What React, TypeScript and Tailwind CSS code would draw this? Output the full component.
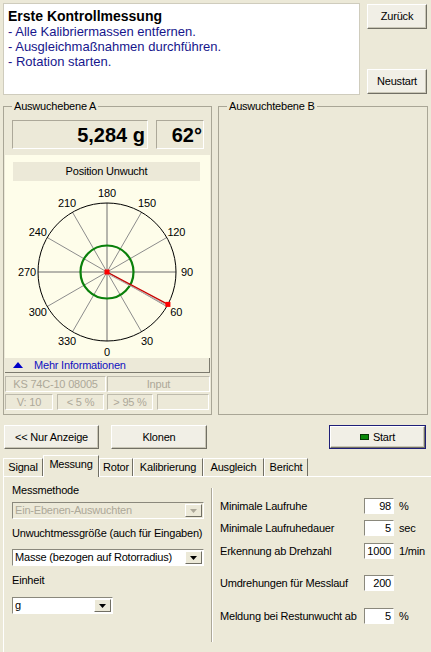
import React from "react";

const btn =
  "flex items-center justify-center bg-[#F1EFE6] border border-t-white border-l-white border-r-[#716F64] border-b-[#716F64] shadow-[inset_-1px_-1px_0_#C9C6B6]";

function Combo({ text, w, disabled }: { text: string; w: string; disabled?: boolean }) {
  return (
    <div
      className={`flex items-center h-[17px] ${w} border border-t-[#8A887C] border-l-[#8A887C] border-r-white border-b-white ${
        disabled ? "bg-[#ECE9D8] text-[#ACA899]" : "bg-white text-black"
      }`}
    >
      <span className="flex-1 pl-[2px] whitespace-nowrap overflow-hidden">{text}</span>
      <div className="w-[17px] h-[13px] mr-[1px] flex items-center justify-center bg-[#ECE9D8] border border-t-white border-l-white border-r-[#716F64] border-b-[#716F64]">
        <svg width="7" height="4" viewBox="0 0 7 4">
          <polygon points="0,0 7,0 3.5,4" fill={disabled ? "#ACA899" : "#000"} />
        </svg>
      </div>
    </div>
  );
}

function NumRow({ label, value, unit, mt }: { label: string; value: string; unit?: string; mt: string }) {
  return (
    <div className={`flex items-center h-[16px] ${mt}`}>
      <span className="w-[144px] whitespace-nowrap">{label}</span>
      <div className="w-[30px] h-[16px] bg-white border border-t-[#8A887C] border-l-[#8A887C] border-r-white border-b-white flex items-center justify-end pr-[2px]">
        {value}
      </div>
      {unit && <span className="ml-[5px]">{unit}</span>}
    </div>
  );
}

function Chart() {
  const cx = 102;
  const cy = 91;
  const R = 69;
  const rad = (d: number) => (d * Math.PI) / 180;
  const spokes = [0, 30, 60, 90, 120, 150];
  const labels = [0, 30, 60, 90, 120, 150, 180, 210, 240, 270, 300, 330];
  const a = 62;
  const px = cx + R * Math.sin(rad(a));
  const py = cy + R * Math.cos(rad(a));
  return (
    <svg width="205" height="177" viewBox="0 0 205 177" className="block">
      {spokes.map((d) => {
        const dx = R * Math.sin(rad(d));
        const dy = R * Math.cos(rad(d));
        return (
          <line
            key={d}
            x1={cx - dx}
            y1={cy - dy}
            x2={cx + dx}
            y2={cy + dy}
            stroke={d % 90 === 0 ? "#6E6E6E" : "#8C8C8C"}
            strokeWidth="1"
          />
        );
      })}
      <circle cx={cx} cy={cy} r={R} fill="none" stroke="#000" strokeWidth="1" />
      <circle cx={cx} cy={cy} r={26.5} fill="none" stroke="#0A800A" strokeWidth="2.2" />
      <line x1={cx} y1={cy + 1.5} x2={px} y2={py + 1.5} stroke="#B8A8A8" strokeWidth="1" />
      <line x1={cx} y1={cy} x2={px} y2={py} stroke="#C80000" strokeWidth="1.2" />
      <rect x={cx - 2.5} y={cy - 2.5} width="5" height="5" fill="#FF0000" />
      <rect x={px - 2.5} y={py - 2.5} width="5" height="5" fill="#FF0000" />
      {labels.map((d) => (
        <text
          key={d}
          x={cx + 80 * Math.sin(rad(d))}
          y={cy + 79.5 * Math.cos(rad(d))}
          textAnchor="middle"
          dominantBaseline="central"
          fontSize="11"
          fontFamily="'Liberation Sans', Arial, sans-serif"
          fill="#000"
        >
          {d}
        </text>
      ))}
    </svg>
  );
}

const disBox =
  "h-[16px] flex items-center justify-center text-[#ACA899] border border-t-[#BDBAAC] border-l-[#BDBAAC] border-r-white border-b-white";

export default function App() {
  const tabs: { t: string; w: string; sel?: boolean }[] = [
    { t: "Signal", w: "w-[40px]" },
    { t: "Messung", w: "w-[56px]", sel: true },
    { t: "Rotor", w: "w-[34px]" },
    { t: "Kalibrierung", w: "w-[70px]" },
    { t: "Ausgleich", w: "w-[61px]" },
    { t: "Bericht", w: "w-[44px]" },
  ];
  return (
    <div className="w-[431px] h-[652px] overflow-hidden bg-[#ECE9D8] text-black text-[11px] leading-[13px] tracking-[-0.2px] font-['Liberation_Sans',Arial,sans-serif]">
      {/* top area */}
      <div className="flex pt-[3px] pl-[3px]">
        <div className="w-[357px] h-[92px] bg-white border border-[#CFCCBD] pl-[4px] pt-[5px] tracking-normal">
          <div className="text-[14px] leading-[15px] font-bold">Erste Kontrollmessung</div>
          <div className="text-[13px] leading-[15px] text-[#16168C]">- Alle Kalibriermassen entfernen.</div>
          <div className="text-[13px] leading-[15px] text-[#16168C]">- Ausgleichmaßnahmen durchführen.</div>
          <div className="text-[13px] leading-[15px] text-[#16168C]">- Rotation starten.</div>
        </div>
        <div className="ml-[7px] w-[60px] h-[91px] pt-[1px] flex flex-col justify-between">
          <div className={btn + " h-[25px]"}>Zurück</div>
          <div className={btn + " h-[25px]"}>Neustart</div>
        </div>
      </div>

      {/* group boxes */}
      <div className="flex mt-[5px] pl-[3px] gap-[6px]">
        <fieldset className="w-[209px] h-[315px] border border-[#A9A696] px-[1px]">
          <legend className="ml-[7px] px-[2px] leading-[13px]">Auswuchebene A</legend>
          <div className="flex pl-[7px] mt-[7px] gap-[8px]">
            <div className="w-[136px] h-[29px] flex items-center justify-end pr-[2px] border border-t-[#ACA899] border-l-[#ACA899] border-r-white border-b-white text-[20px] leading-[20px] font-bold tracking-normal">
              5,284 g
            </div>
            <div className="w-[48px] h-[29px] flex items-center justify-end pr-[1px] border border-t-[#ACA899] border-l-[#ACA899] border-r-white border-b-white text-[20px] leading-[20px] font-bold tracking-normal">
              62°
            </div>
          </div>
          <div className="mt-[6px] h-[218px] bg-[#FEFDEA] flex flex-col">
            <div className="mt-[7px] ml-[8px] w-[187px] h-[19px] bg-[#ECE9D8] flex items-center justify-center">
              Position Unwucht
            </div>
            <Chart />
            <div className="h-[15px] bg-[#ECE9D8] border-r border-b border-[#7C7A6E] flex items-center">
              <svg width="10" height="6" viewBox="0 0 10 6" className="ml-[8px]">
                <polygon points="5,0 10,6 0,6" fill="#0000C8" />
              </svg>
              <span className="ml-[11px] text-[#1010C0]">Mehr Informationen</span>
            </div>
          </div>
          <div className="mt-[3px] flex gap-[1px]">
            <div className={disBox + " w-[101px]"}>KS 74C-10 08005</div>
            <div className={disBox + " w-[103px]"}>Input</div>
          </div>
          <div className="mt-[2px] flex">
            <div className={disBox + " w-[48px]"}>V: 10</div>
            <div className={disBox + " w-[47px] ml-[4px]"}>&lt; 5 %</div>
            <div className={disBox + " w-[46px] ml-[3px]"}>&gt; 95 %</div>
            <div className={disBox + " w-[52px] ml-[4px]"}></div>
          </div>
        </fieldset>
        <fieldset className="w-[210px] h-[315px] border border-[#A9A696]">
          <legend className="ml-[8px] px-[2px] leading-[13px]">Auswuchtebene B</legend>
        </fieldset>
      </div>

      {/* buttons */}
      <div className="flex mt-[10px] pl-[4px] pr-[5px] h-[24px]">
        <div className={btn + " w-[95px]"}>&lt;&lt; Nur Anzeige</div>
        <div className={btn + " w-[96px] ml-[12px]"}>Klonen</div>
        <div className="ml-auto w-[97px] border border-[#1F1F78]">
          <div className={btn + " h-full"}>
            <span className="w-[9px] h-[6px] bg-[#0A8A0A] border border-[#063806] mr-[4px]" />
            Start
          </div>
        </div>
      </div>

      {/* tabs */}
      <div className="flex items-end h-[21px] mt-[6px] pl-[3px]">
        {tabs.map((t) =>
          t.sel ? (
            <div
              key={t.t}
              className={`${t.w} h-[22px] -mb-[1px] relative z-10 bg-[#ECE9D8] border-t border-l border-white border-r border-r-[#716F64] flex justify-center pt-[2px]`}
            >
              {t.t}
            </div>
          ) : (
            <div
              key={t.t}
              className={`${t.w} h-[18px] border-t border-l border-white border-r border-r-[#716F64] flex items-center justify-center`}
            >
              {t.t}
            </div>
          )
        )}
      </div>

      {/* tab panel */}
      <div className="ml-[3px] h-[176px] flex border-t border-l border-white">
        <div className="w-[207px] pl-[8px] pt-[7px] flex flex-col">
          <div>Messmethode</div>
          <div className="mt-[5px]">
            <Combo text="Ein-Ebenen-Auswuchten" w="w-[192px]" disabled />
          </div>
          <div className="mt-[8px]">Unwuchtmessgröße (auch für Eingaben)</div>
          <div className="mt-[9px]">
            <Combo text="Masse (bezogen auf Rotorradius)" w="w-[192px]" />
          </div>
          <div className="mt-[8px]">Einheit</div>
          <div className="mt-[10px]">
            <Combo text="g" w="w-[101px]" />
          </div>
        </div>
        <div className="mt-[11px] h-[154px] flex-1 border-l border-[#ACA899] shadow-[inset_1px_0_0_#fff] pl-[8px] pt-[10px]">
          <NumRow label="Minimale Laufruhe" value="98" unit="%" mt="mt-0" />
          <NumRow label="Minimale Laufruhedauer" value="5" unit="sec" mt="mt-[6px]" />
          <NumRow label="Erkennung ab Drehzahl" value="1000" unit="1/min" mt="mt-[7px]" />
          <NumRow label="Umdrehungen für Messlauf" value="200" mt="mt-[16px]" />
          <NumRow label="Meldung bei Restunwucht ab" value="5" unit="%" mt="mt-[17px]" />
        </div>
      </div>
    </div>
  );
}
